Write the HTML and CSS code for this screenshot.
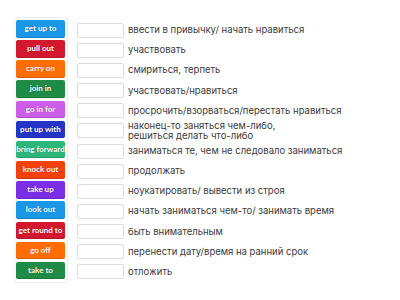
FILE: index.html
```html
<!DOCTYPE html>
<html lang="en">
<head>
  <meta charset="UTF-8">
  <title>Match up</title>
  <link rel="stylesheet" href="styles.css">
</head>
<body>
  <div id="board">
    <div class="cards">
      <div class="row"><div class="tile blue">get up to</div></div>
      <div class="row"><div class="tile red">pull out</div></div>
      <div class="row"><div class="tile orange">carry on</div></div>
      <div class="row"><div class="tile green">join in</div></div>
      <div class="row"><div class="tile pink">go in for</div></div>
      <div class="row"><div class="tile navy">put up with</div></div>
      <div class="row"><div class="tile teal">bring forward</div></div>
      <div class="row"><div class="tile flame">knock out</div></div>
      <div class="row"><div class="tile purple">take up</div></div>
      <div class="row"><div class="tile blue">look out</div></div>
      <div class="row"><div class="tile red">get round to</div></div>
      <div class="row"><div class="tile orange">go off</div></div>
      <div class="row"><div class="tile green">take to</div></div>
    </div>

    <div class="answers">
      <div class="row"><div class="slot"></div><div class="def">ввести в привычку/ начать нравиться</div></div>
      <div class="row"><div class="slot"></div><div class="def">участвовать</div></div>
      <div class="row"><div class="slot"></div><div class="def">смириться, терпеть</div></div>
      <div class="row"><div class="slot"></div><div class="def">участвовать/нравиться</div></div>
      <div class="row"><div class="slot"></div><div class="def">просрочить/взорваться/перестать нравиться</div></div>
      <div class="row"><div class="slot"></div><div class="def">наконец-то заняться чем-либо,<br>решиться делать что-либо</div></div>
      <div class="row"><div class="slot"></div><div class="def">заниматься те, чем не следовало заниматься</div></div>
      <div class="row"><div class="slot"></div><div class="def">продолжать</div></div>
      <div class="row"><div class="slot"></div><div class="def">ноукатировать/ вывести из строя</div></div>
      <div class="row"><div class="slot"></div><div class="def">начать заниматься чем-то/ занимать время</div></div>
      <div class="row"><div class="slot"></div><div class="def">быть внимательным</div></div>
      <div class="row"><div class="slot"></div><div class="def">перенести дату/время на ранний срок</div></div>
      <div class="row"><div class="slot"></div><div class="def">отложить</div></div>
    </div>
  </div>
</body>
</html>
```

FILE: styles.css
```css
html, body {
  margin: 0;
  background: #fff;
  font-family: Inter, "Noto Sans", sans-serif;
  color: #3a3a3a;
}

#board {
  display: flex;
  align-items: flex-start;
  padding: 17px 0 0 14px;
}

.cards {
  display: flex;
  flex-direction: column;
  padding: 2px 2px 0 1px;
  border: 1px solid #eceef0;
  border-radius: 3px;
}

.cards .row {
  height: 20.17px;
}

.tile {
  width: 49px;
  height: 17.5px;
  border-radius: 2px;
  color: #fff;
  font-family: Lato, sans-serif;
  font-weight: 700;
  font-size: 8px;
  line-height: 17.5px;
  text-align: center;
  white-space: nowrap;
  text-shadow: 0 0 1px rgba(0, 0, 0, 0.35);
  box-shadow: inset 0 -1px 0 rgba(0, 0, 0, 0.15);
}

.blue   { background: #1b97e8; }
.red    { background: #d3172e; }
.orange { background: #ff6d00; }
.green  { background: #1f8b46; }
.pink   { background: #cb5de9; }
.navy   { background: #2434c6; }
.teal   { background: #2db67a; }
.flame  { background: #f2410d; }
.purple { background: #7b2ee6; }

.answers {
  display: flex;
  flex-direction: column;
  margin-left: 9px;
  padding-top: 3px;
}

.answers .row {
  height: 20.17px;
  display: flex;
  align-items: center;
}

.slot {
  width: 45px;
  height: 13px;
  border: 1px solid #dcdcdc;
  border-radius: 2px;
  flex-shrink: 0;
}

.def {
  margin-left: 4px;
  font-size: 9.5px;
  line-height: 10px;
  white-space: nowrap;
}
```
